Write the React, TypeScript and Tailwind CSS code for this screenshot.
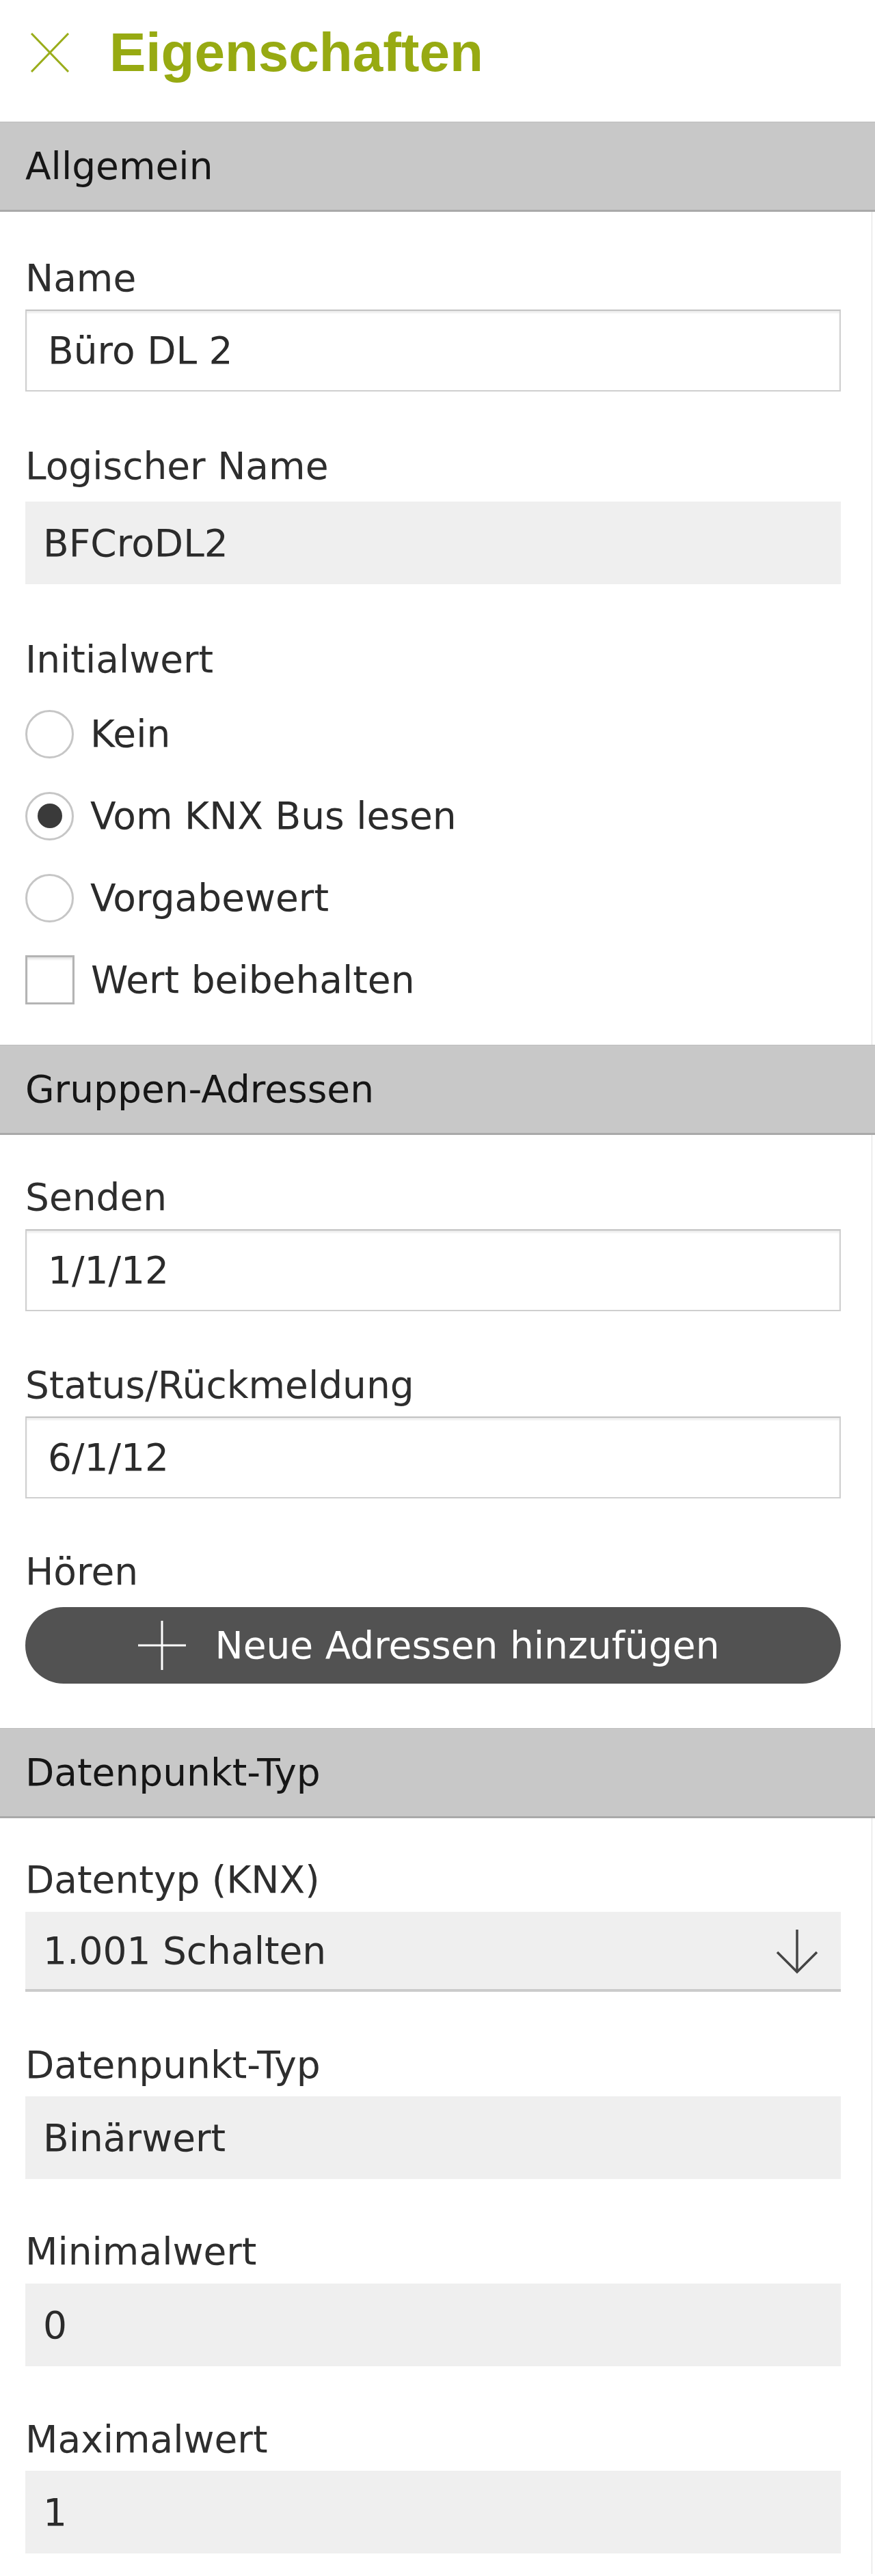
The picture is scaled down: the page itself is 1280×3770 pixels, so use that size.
import React from "react";

const Bar = ({ title }: { title: string }) => (
  <div className="h-[132px] w-[1280px] bg-[#c8c8c8] border-t border-t-[#bdbdbd] border-b-[3px] border-b-[#a9a9a9] flex items-center px-[37px] text-[55px] leading-[64px] text-[#161616]">
    {title}
  </div>
);

const Label = ({ text, className }: { text: string; className: string }) => (
  <div className={"text-[55px] leading-[64px] text-[#2e2e2e] " + className}>{text}</div>
);

const TextInput = ({ value, className }: { value: string; className: string }) => (
  <div
    className={
      "h-[120px] w-full bg-white border-2 border-[#cfcfcf] border-t-[#c2c2c2] shadow-[inset_0_3px_3px_rgba(0,0,0,0.08)] flex items-center pl-[31px] text-[55px] leading-[64px] text-[#2b2b2b] " +
      className
    }
  >
    {value}
  </div>
);

const ReadBox = ({ value, className }: { value: string; className: string }) => (
  <div
    className={
      "h-[121px] w-full bg-[#efefef] flex items-center pl-[26px] text-[55px] leading-[64px] text-[#2b2b2b] " +
      className
    }
  >
    {value}
  </div>
);

const Radio = ({ label, checked }: { label: string; checked?: boolean }) => (
  <div className="h-[72px] flex items-center gap-[24px]">
    <div className="w-[71px] h-[71px] rounded-full border-[3px] border-[#c6c6c6] bg-white flex items-center justify-center shrink-0">
      {checked && <div className="w-[36px] h-[36px] rounded-full bg-[#3a3a3a]" />}
    </div>
    <span className="text-[55px] leading-[64px] text-[#2b2b2b]">{label}</span>
  </div>
);

export default function App() {
  return (
    <div className="w-[1280px] min-h-[3770px] bg-white font-['DejaVu_Sans','Verdana',sans-serif] pb-[30px]">
      {/* Header */}
      <div className="h-[178px] flex items-start pt-[37px] pl-[44px]">
        <svg width="58" height="58" viewBox="0 0 58 58" className="mt-[11px] shrink-0">
          <line x1="2" y1="1" x2="56" y2="57" stroke="#9aad1a" strokeWidth="3" />
          <line x1="56" y1="1" x2="2" y2="57" stroke="#9aad1a" strokeWidth="3" />
        </svg>
        <div className="ml-[58px] font-['Liberation_Sans','Arial',sans-serif] font-bold text-[80px] leading-[80px] text-[#97aa12]">
          Eigenschaften
        </div>
      </div>

      <Bar title="Allgemein" />
      <div className="w-[1276px] border-r border-r-[#dedede] pl-[37px] pr-[45px] pt-[65px] pb-[59px] flex flex-col">
        <Label text="Name" className="" />
        <TextInput value="Büro DL 2" className="mt-[14px]" />
        <Label text="Logischer Name" className="mt-[77px]" />
        <ReadBox value="BFCroDL2" className="mt-[20px]" />
        <Label text="Initialwert" className="mt-[78px]" />
        <div className="mt-[41px] flex flex-col gap-[48px]">
          <Radio label="Kein" />
          <Radio label="Vom KNX Bus lesen" checked />
          <Radio label="Vorgabewert" />
          <div className="h-[72px] flex items-center gap-[24px]">
            <div className="w-[72px] h-[72px] border-[3px] border-[#b4b4b4] bg-white shadow-[inset_0_3px_3px_rgba(0,0,0,0.1)] shrink-0" />
            <span className="text-[55px] leading-[64px] text-[#2b2b2b]">Wert beibehalten</span>
          </div>
        </div>
      </div>

      <Bar title="Gruppen-Adressen" />
      <div className="w-[1276px] border-r border-r-[#dedede] pl-[37px] pr-[45px] pt-[59px] pb-[65px] flex flex-col">
        <Label text="Senden" className="" />
        <TextInput value="1/1/12" className="mt-[15px]" />
        <Label text="Status/Rückmeldung" className="mt-[76px]" />
        <TextInput value="6/1/12" className="mt-[14px]" />
        <Label text="Hören" className="mt-[75px]" />
        <div className="mt-[20px] h-[112px] w-full rounded-full bg-[#525252] flex items-center justify-center gap-[42px] pr-[12px] text-white">
          <svg width="70" height="72" viewBox="0 0 70 72" className="shrink-0">
            <line x1="35" y1="0" x2="35" y2="72" stroke="#ffffff" strokeWidth="3" />
            <line x1="0" y1="36" x2="70" y2="36" stroke="#ffffff" strokeWidth="3" />
          </svg>
          <span className="text-[55px] leading-[64px] text-white">Neue Adressen hinzufügen</span>
        </div>
      </div>

      <Bar title="Datenpunkt-Typ" />
      <div className="w-[1276px] border-r border-r-[#dedede] pl-[37px] pr-[45px] pt-[58px] flex flex-col">
        <Label text="Datentyp (KNX)" className="" />
        <div className="mt-[15px] h-[117px] w-full bg-[#efefef] border-b-[4px] border-b-[#cbcbcb] flex items-center justify-between pl-[26px] pr-[32px]">
          <span className="text-[55px] leading-[64px] text-[#2b2b2b]">1.001 Schalten</span>
          <svg width="64" height="66" viewBox="0 0 64 66" className="shrink-0 mt-[4px]">
            <line x1="32" y1="0" x2="32" y2="62" stroke="#444444" strokeWidth="3.5" />
            <polyline points="3,33 32,62 61,33" fill="none" stroke="#444444" strokeWidth="3.5" />
          </svg>
        </div>
        <Label text="Datenpunkt-Typ" className="mt-[75px]" />
        <ReadBox value="Binärwert" className="mt-[14px]" />
        <Label text="Minimalwert" className="mt-[74px]" />
        <ReadBox value="0" className="mt-[15px]" />
        <Label text="Maximalwert" className="mt-[75px]" />
        <ReadBox value="1" className="mt-[14px]" />
        <div className="h-[30px]" />
      </div>
    </div>
  );
}
